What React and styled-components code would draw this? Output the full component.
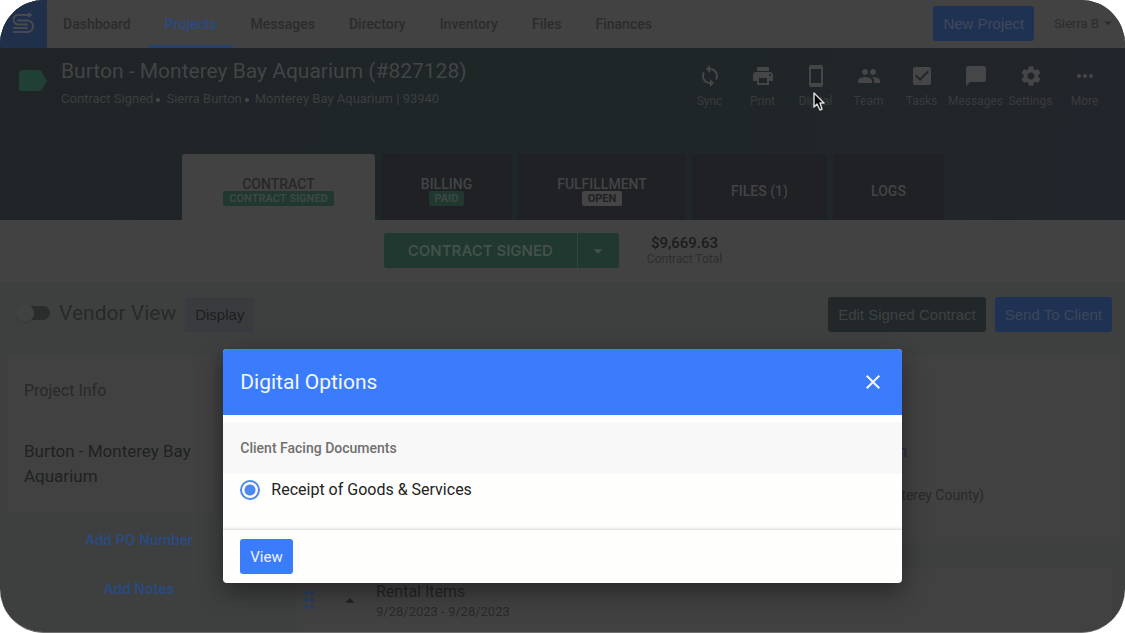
import React from "react";
import styled, { createGlobalStyle } from "styled-components";
import {
  MdSync, MdPrint, MdSmartphone, MdGroup, MdCheckBox, MdChatBubble,
  MdSettings, MdMoreHoriz, MdClose, MdArrowDropDown, MdArrowDropUp,
} from "react-icons/md";

const GlobalStyle = createGlobalStyle`
  * { box-sizing: border-box; }
  body { margin: 0; background: #fff; font-family: Roboto, "Liberation Sans", sans-serif; }
  button, input { font: inherit; margin: 0; }
  h1, h2, h3, p { margin: 0; font-weight: 400; }
  a { color: inherit; text-decoration: none; }
`;

const Frame = styled.div`
  position: relative;
  height: 100vh;
  overflow: hidden;
  border-radius: 44px;
  background: #3e403f;
  border-bottom: 1px solid #707070;
`;

const NavBar = styled.header`
  display: flex;
  align-items: stretch;
  height: 48px;
  background: #424242;
  padding-right: 8px;
`;

const LogoLink = styled.a`
  display: block;
  width: 47px;
  background: #20304b;
`;

const NavLinks = styled.nav`
  display: flex;
  gap: 2px;
  flex: 1;
`;

const NavLink = styled.a`
  display: flex;
  align-items: center;
  padding: 0 16px;
  font-size: 14px;
  font-weight: 500;
  color: ${(p) => (p.$active ? "#2a4a82" : "#2c2c2d")};
  border-bottom: 3px solid ${(p) => (p.$active ? "#26406f" : "transparent")};
  border-top: 3px solid transparent;
`;

const NavActions = styled.div`
  display: flex;
  align-items: center;
  gap: 20px;
  padding-bottom: 2px;
`;

const Button = styled.button`
  height: 35px;
  padding: 0 10px;
  border: 0;
  border-radius: 3px;
  font-size: 15px;
  white-space: nowrap;
  font-family: ${(p) => (p.$plain ? '"Liberation Sans", sans-serif' : "inherit")};
  background: ${(p) => p.$bg};
  color: ${(p) => p.$color};
`;

const UserButton = styled.button`
  display: flex;
  align-items: center;
  padding: 0;
  border: 0;
  background: none;
  font-size: 13px;
  color: #2c2c2c;
`;

const Hero = styled.section`
  display: flex;
  flex-direction: column;
  justify-content: space-between;
  height: 172px;
  background: linear-gradient(100deg, #202426 0%, #1f2628 40%, #202628 70%, #22252b 100%);
`;

const HeroTop = styled.div`
  display: flex;
  align-items: flex-start;
  padding: 8px 14px 0 17px;
`;

const TagIcon = styled.svg`
  width: 31px;
  height: 24px;
  margin-top: 13px;
`;

const Heading = styled.div`
  flex: 1;
  padding-left: 13px;
`;

const Title = styled.h1`
  font-size: 21px;
  line-height: 30px;
  color: #424446;
`;

const Meta = styled.p`
  display: flex;
  gap: 3px;
  font-size: 13px;
  line-height: 26px;
  color: #3c3e40;
`;

const Dot = styled.span`
  width: 4px;
  height: 4px;
  margin: 12px 3px 0 0;
  border-radius: 50%;
  background: #47494b;
`;

const Tools = styled.div`
  display: flex;
  padding-top: 8px;
`;

const Tool = styled.button`
  display: flex;
  flex-direction: column;
  align-items: center;
  gap: 5px;
  width: ${(p) => (p.$wide ? 55 : 53)}px;
  padding: 0;
  border: 0;
  background: none;
  font-size: 12px;
  line-height: 16px;
  color: #393b3d;
  svg { width: 24px; height: 24px; color: #454648; }
`;

const Tabs = styled.nav`
  display: flex;
  gap: 6px;
  padding-left: 182px;
`;

const Tab = styled.a`
  display: flex;
  flex-direction: column;
  align-items: center;
  justify-content: center;
  width: ${(p) => p.$width}px;
  height: 66px;
  padding-top: 8px;
  border-radius: 3px 3px 0 0;
  background: ${(p) => (p.$active ? "#424242" : "#202125")};
  color: ${(p) => (p.$active ? "#272828" : "#434446")};
  font-size: 14px;
  font-weight: 500;
  line-height: 14px;
`;

const Badge = styled.span`
  padding: 0 6px;
  border-radius: 2px;
  font-size: 11px;
  font-weight: 700;
  line-height: 15px;
  background: ${(p) => (p.$grey ? "#454545" : "#20382f")};
  color: ${(p) => (p.$grey ? "#202124" : "#3d4843")};
`;

const StatusBar = styled.section`
  display: flex;
  justify-content: center;
  gap: 28px;
  height: 62px;
  padding: 13px 19px 0 0;
  background: #424242;
`;

const SplitButton = styled.div`
  display: flex;
  gap: 1px;
  height: 35px;
  border-radius: 3px;
  overflow: hidden;
  background: #36443e;
`;

const StatusButton = styled.button`
  display: flex;
  align-items: center;
  justify-content: center;
  width: ${(p) => p.$width}px;
  padding: 0;
  border: 0;
  background: #20382f;
  color: #44504a;
  font-size: 15px;
  font-weight: 600;
  font-family: Inter, "Liberation Sans", sans-serif;
`;

const Total = styled.div`
  padding-top: 1px;
  text-align: center;
  font-size: 12px;
  line-height: 14px;
  color: #2e2e2e;
`;

const Amount = styled.strong`
  display: block;
  font-size: 15px;
  line-height: 18px;
  font-weight: 500;
  color: #1c1c1d;
`;

const Controls = styled.section`
  display: flex;
  align-items: center;
  gap: 9px;
  padding: 15px 13px 0 20px;
`;

const SwitchLabel = styled.label`
  display: flex;
  align-items: center;
  gap: 9px;
  flex: 0 0 auto;
  padding-bottom: 4px;
  font-size: 21px;
  line-height: 24px;
  color: #282929;
`;

const Switch = styled.input`
  appearance: none;
  width: 30px;
  height: 14px;
  border-radius: 7px;
  background: #2b2c2c;
  &::before {
    content: "";
    display: block;
    width: 18px;
    height: 18px;
    margin: -2px 0 0 -4px;
    border-radius: 50%;
    background: #404141;
    box-shadow: 0 1px 1px #383939;
  }
`;

const Spacer = styled.div`
  flex: 1;
`;

const Content = styled.main`
  display: grid;
  grid-template-columns: 207px 1fr;
  gap: 16px;
  padding: 25px 5px 0 8px;
`;

const InfoCard = styled.section`
  height: 156px;
  padding: 21px 16px;
  background: #414141;
  color: #202121;
  font-size: 17px;
  line-height: 25px;
`;

const CardTitle = styled.h2`
  margin-bottom: 36px;
  font-size: 16px;
  color: #292929;
`;

const SideLinks = styled.div`
  display: flex;
  flex-direction: column;
  align-items: center;
  gap: 33px;
  padding: 19px 0 0 55px;
  font-size: 15px;
  font-weight: 500;
  line-height: 16px;
  color: #2a4a82;
`;

const VenueCard = styled.section`
  height: 186px;
  padding: 83px 136px 0 0;
  text-align: right;
  background: #414141;
  font-size: 14px;
  line-height: 16px;
  color: #292929;
`;

const VenueName = styled.p`
  padding-right: 77px;
  margin-bottom: 23px;
  font-size: 16px;
  line-height: 24px;
  color: #252c3a;
`;

const ItemsCard = styled.section`
  display: flex;
  align-items: flex-start;
  gap: 15px;
  height: 80px;
  margin: 25px 8px 0 66px;
  padding: 13px 6px;
  background: #414141;
`;

const Handle = styled.svg`
  width: 12px;
  height: 18px;
  margin: 10px 9px 0 0;
`;

const ItemText = styled.div`
  font-size: 13px;
  line-height: 18px;
  color: #292929;
`;

const ItemTitle = styled.h3`
  font-size: 16px;
  line-height: 22px;
  color: #252525;
`;

const Chevron = styled.button`
  display: flex;
  padding: 9px 0 0;
  border: 0;
  background: none;
  font-size: 22px;
  color: #222;
`;

const Overlay = styled.div`
  position: absolute;
  inset: 0;
  display: flex;
  justify-content: center;
  align-items: flex-end;
  padding-bottom: 49px;
`;

const Dialog = styled.section`
  width: 60.3%;
  overflow: hidden;
  border-radius: 4px;
  background: #fefefd;
  box-shadow: 0 9px 24px rgba(0, 0, 0, 0.4);
`;

const DialogHeader = styled.header`
  display: flex;
  align-items: center;
  justify-content: space-between;
  height: 66px;
  padding: 0 17px;
  background: #3b7cfc;
  color: #f4f7ff;
`;

const DialogTitle = styled.h2`
  font-size: 21px;
`;

const CloseButton = styled.button`
  display: flex;
  padding: 0;
  border: 0;
  background: none;
  color: inherit;
  font-size: 24px;
`;

const GroupTitle = styled.h3`
  margin-top: 7px;
  padding: 0 17px;
  font-size: 14px;
  font-weight: 500;
  line-height: 52px;
  color: #707070;
  background: #f8f8f8;
`;

const Option = styled.label`
  display: flex;
  align-items: center;
  gap: 11px;
  height: 55px;
  padding: 0 17px 24px;
  font-size: 16px;
  line-height: 20px;
  color: #222;
`;

const Radio = styled.input`
  appearance: none;
  width: 20px;
  height: 20px;
  border: 2px solid #5089ee;
  border-radius: 50%;
  background: radial-gradient(circle, #4d88f0 0 5px, transparent 6px);
`;

const DialogFooter = styled.footer`
  padding: 9px 17px;
  border-top: 1px solid #e4e4e4;
  box-shadow: 0 -1px 3px rgba(0, 0, 0, 0.08);
`;

const Cursor = styled.svg`
  position: absolute;
  left: 812px;
  top: 91px;
  width: 13px;
  height: 20px;
`;

const NAV = ["Dashboard", "Projects", "Messages", "Directory", "Inventory", "Files", "Finances"];
const TOOLS = [
  ["Sync", MdSync], ["Print", MdPrint], ["Digital", MdSmartphone], ["Team", MdGroup],
  ["Tasks", MdCheckBox], ["Messages", MdChatBubble, true], ["Settings", MdSettings, true], ["More", MdMoreHoriz],
];
const TABS = [
  { name: "CONTRACT", badge: "CONTRACT SIGNED", width: 193, active: true },
  { name: "BILLING", badge: "PAID", width: 131 },
  { name: "FULFILLMENT", badge: "OPEN", width: 168, grey: true },
  { name: "FILES (1)", width: 135 },
  { name: "LOGS", width: 111 },
];

export default function App() {
  return (
    <Frame>
      <GlobalStyle />
      <NavBar>
        <LogoLink href="#" aria-label="Home">
          <svg width="47" height="48" viewBox="0 0 47 48" fill="none" stroke="#454a50" strokeWidth="2" strokeLinecap="round" strokeLinejoin="round">
            <path d="M31 15H17a5 5 0 0 0 0 9.500H27" />
            <path d="M18 20.500H28a5.800 5.800 0 0 1 0 11.500H13.500" />
            <path d="M14 28H27" />
            <path d="M29 13l3 2-3 2z" strokeWidth="1" fill="#454a50" />
          </svg>
        </LogoLink>
        <NavLinks aria-label="Main">
          {NAV.map((n) => <NavLink key={n} href="#" $active={n === "Projects"}>{n}</NavLink>)}
        </NavLinks>
        <NavActions>
          <Button $plain $bg="#203253" $color="#3f4959">New Project</Button>
          <UserButton>Sierra B <MdArrowDropDown size={18} /></UserButton>
        </NavActions>
      </NavBar>
      <Hero>
        <HeroTop>
          <TagIcon viewBox="0 0 31 24"><path d="M5 1h17q2 0 3 2l5 9-5 8q-1 2-3 2H5q-3 0-3-3V4q0-3 3-3z" fill="#204036" /></TagIcon>
          <Heading>
            <Title>Burton - Monterey Bay Aquarium (#827128)</Title>
            <Meta>Contract Signed <Dot /> Sierra Burton <Dot /> Monterey Bay Aquarium | 93940</Meta>
          </Heading>
          <Tools>
            {TOOLS.map(([name, Icon, wide]) => <Tool key={name} $wide={wide}><Icon />{name}</Tool>)}
          </Tools>
        </HeroTop>
        <Tabs aria-label="Project">
          {TABS.map((t) => (
            <Tab key={t.name} href="#" $width={t.width} $active={t.active}>
              {t.name}
              {t.badge && <Badge $grey={t.grey}>{t.badge}</Badge>}
            </Tab>
          ))}
        </Tabs>
      </Hero>
      <StatusBar>
        <SplitButton>
          <StatusButton $width={193}>CONTRACT SIGNED</StatusButton>
          <StatusButton $width={41} aria-label="Change status"><MdArrowDropDown size={22} /></StatusButton>
        </SplitButton>
        <Total><Amount>$9,669.63</Amount>Contract Total</Total>
      </StatusBar>
      <Controls>
        <SwitchLabel><Switch type="checkbox" role="switch" />Vendor View</SwitchLabel>
        <Button $plain $bg="#393b3e" $color="#1d1e20">Display</Button>
        <Spacer />
        <Button $plain $bg="#222829" $color="#3d4243">Edit Signed Contract</Button>
        <Button $plain $bg="#203253" $color="#3b4759">Send To Client</Button>
      </Controls>
      <Content>
        <div>
          <InfoCard><CardTitle>Project Info</CardTitle>Burton - Monterey Bay Aquarium</InfoCard>
          <SideLinks><a href="#">Add PO Number</a><a href="#">Add Notes</a></SideLinks>
        </div>
        <div>
          <VenueCard><VenueName>Monterey Bay Aquarium</VenueName>(Monterey County)</VenueCard>
          <ItemsCard>
            <Handle viewBox="0 0 12 18" fill="#263f6c">
              {[2, 9, 16].map((y) => <g key={y}><circle cx="3" cy={y} r="2" /><circle cx="9" cy={y} r="2" /></g>)}
            </Handle>
            <Chevron aria-label="Collapse"><MdArrowDropUp /></Chevron>
            <ItemText><ItemTitle>Rental Items</ItemTitle>9/28/2023 - 9/28/2023</ItemText>
          </ItemsCard>
        </div>
      </Content>
      <Overlay>
        <Dialog role="dialog" aria-label="Digital Options">
          <DialogHeader>
            <DialogTitle>Digital Options</DialogTitle>
            <CloseButton aria-label="Close"><MdClose /></CloseButton>
          </DialogHeader>
          <GroupTitle>Client Facing Documents</GroupTitle>
          <Option><Radio type="radio" name="document" defaultChecked />Receipt of Goods &amp; Services</Option>
          <DialogFooter><Button $bg="#3b7cfc" $color="#eef4ff">View</Button></DialogFooter>
        </Dialog>
      </Overlay>
      <Cursor viewBox="0 0 13 20"><path d="M2 2v14l3-3 3 6 2-1-2-6h4z" fill="#050505" stroke="#ddd" strokeWidth="1.4" strokeLinejoin="round" /></Cursor>
    </Frame>
  );
}
